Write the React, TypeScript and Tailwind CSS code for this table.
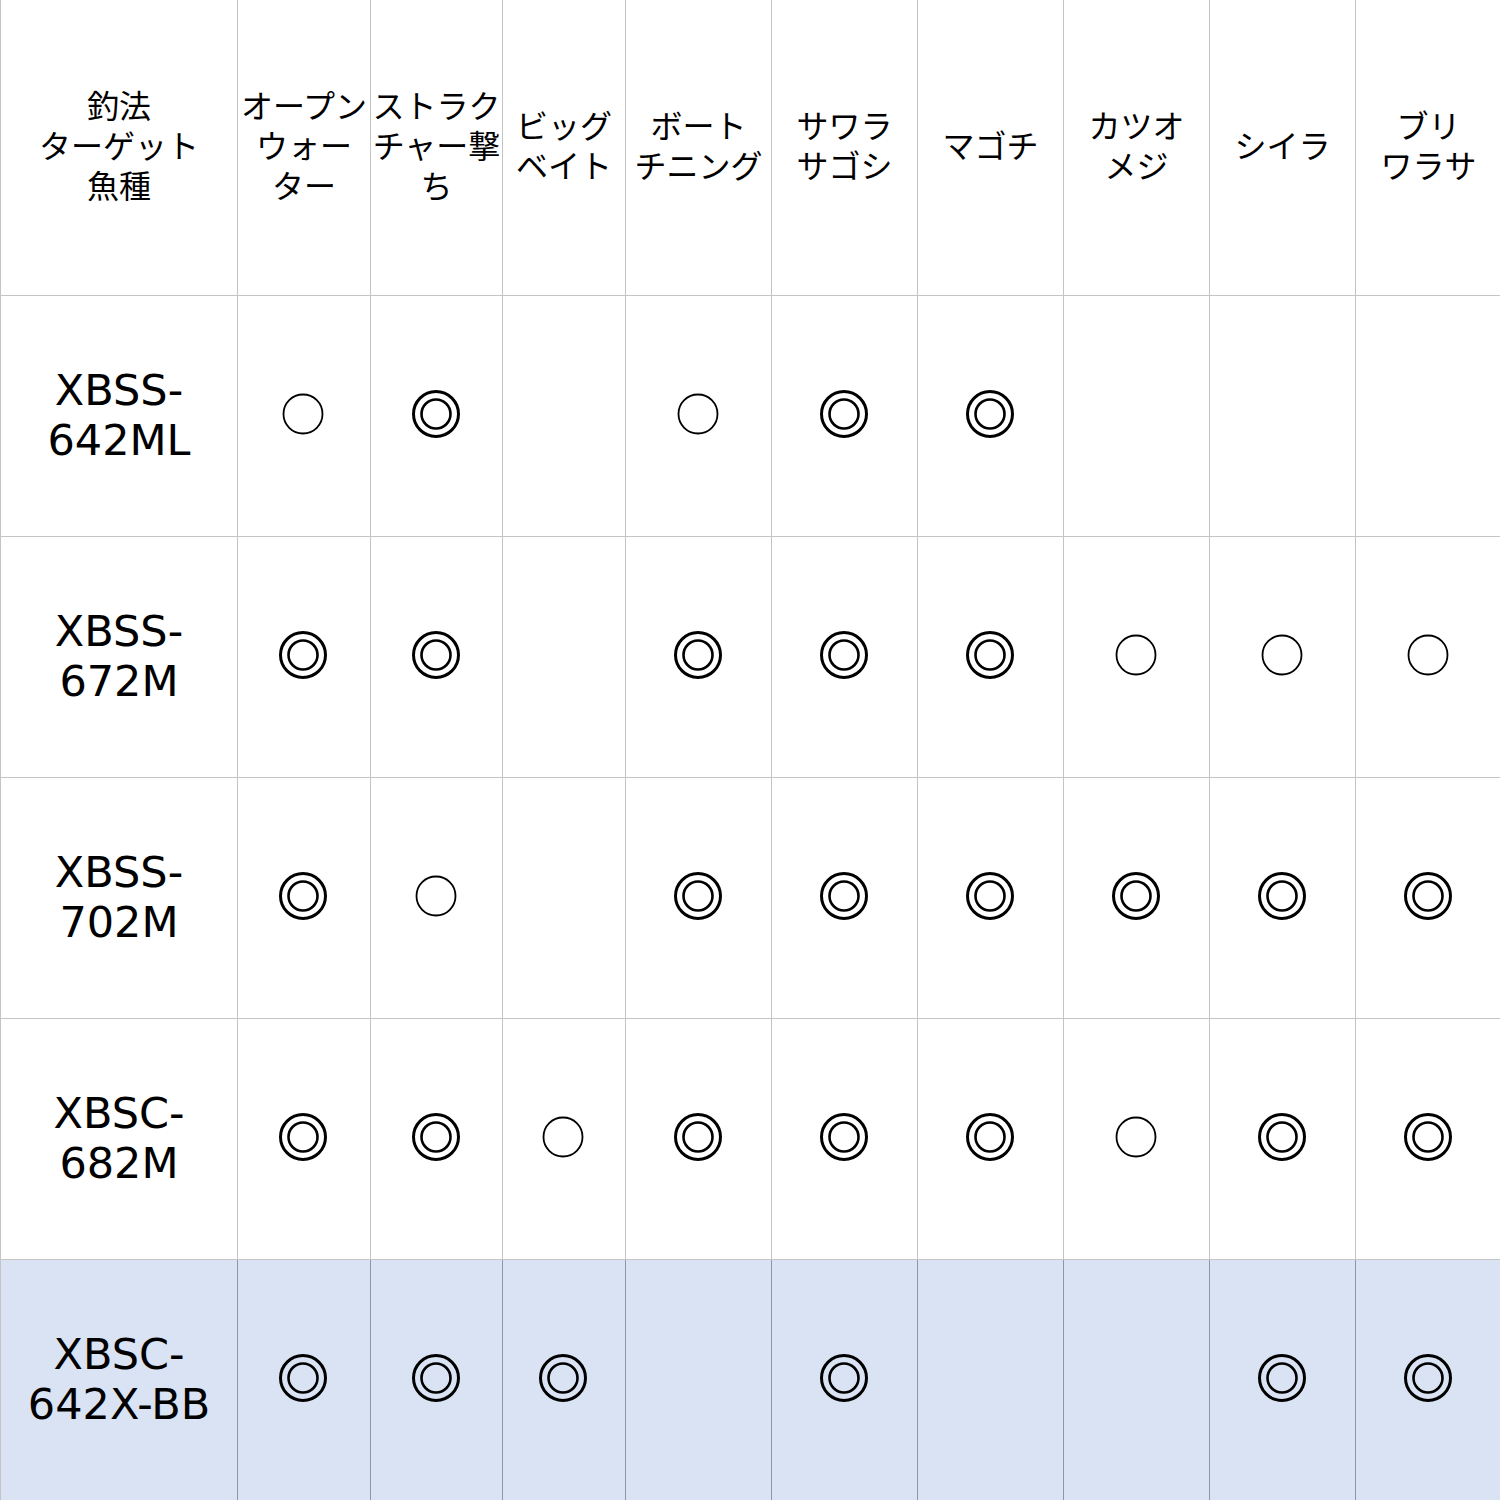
import React from 'react';

type Mark = 'o' | 'w' | '';

const headers: string[][] = [
  ['釣法', 'ターゲット', '魚種'],
  ['オープン', 'ウォー', 'ター'],
  ['ストラク', 'チャー撃', 'ち'],
  ['ビッグ', 'ベイト'],
  ['ボート', 'チニング'],
  ['サワラ', 'サゴシ'],
  ['マゴチ'],
  ['カツオ', 'メジ'],
  ['シイラ'],
  ['ブリ', 'ワラサ'],
];

const rows: { name: string[]; marks: Mark[]; blue?: boolean }[] = [
  { name: ['XBSS-', '642ML'], marks: ['o', 'w', '', 'o', 'w', 'w', '', '', ''] },
  { name: ['XBSS-', '672M'], marks: ['w', 'w', '', 'w', 'w', 'w', 'o', 'o', 'o'] },
  { name: ['XBSS-', '702M'], marks: ['w', 'o', '', 'w', 'w', 'w', 'w', 'w', 'w'] },
  { name: ['XBSC-', '682M'], marks: ['w', 'w', 'o', 'w', 'w', 'w', 'o', 'w', 'w'] },
  { name: ['XBSC-', '642X-BB'], marks: ['w', 'w', 'w', '', 'w', '', '', 'w', 'w'], blue: true },
];

const Circle: React.FC<{ mark: Mark }> = ({ mark }) => {
  if (mark === 'o') {
    return (
      <svg width="44" height="44" viewBox="0 0 44 44">
        <circle cx="22" cy="22" r="19.5" fill="none" stroke="#000" strokeWidth="1.8" />
      </svg>
    );
  }
  if (mark === 'w') {
    return (
      <svg width="50" height="50" viewBox="0 0 50 50">
        <circle cx="25" cy="25" r="22.5" fill="none" stroke="#000" strokeWidth="3" />
        <circle cx="25" cy="25" r="14.5" fill="none" stroke="#000" strokeWidth="2.6" />
      </svg>
    );
  }
  return null;
};

export default function App() {
  const font = { fontFamily: '"DejaVu Sans", "Noto Sans CJK JP", sans-serif' };
  return (
    <div className="w-[1500px] h-[1500px] bg-white text-black" style={font}>
      <div className="grid grid-cols-[237px_133px_132px_123px_146px_146px_146px_146px_146px_146px] grid-rows-[296px_241px_241px_241px_241px_241px] border-l border-[#c4c4c4]">
        {headers.map((h, i) => (
          <div
            key={i}
            className="flex flex-col items-center justify-center border-r border-b border-[#c4c4c4] text-[32px] leading-[40px] whitespace-nowrap pb-[7px]"
            style={{ fontFamily: '"Noto Sans CJK JP", sans-serif' }}
          >
            {h.map((l, j) => (
              <span key={j} className="block h-[40px]">{l}</span>
            ))}
          </div>
        ))}
        {rows.map((r, ri) => (
          <React.Fragment key={ri}>
            <div
              className={
                r.blue
                  ? 'flex flex-col items-center justify-center border-r border-b border-[#8e97a6] bg-[#dae3f3] text-[43px] leading-[50px] pb-[2px]'
                  : 'flex flex-col items-center justify-center border-r border-b border-[#c4c4c4] text-[43px] leading-[50px] pb-[2px]'
              }
            >
              {r.name.map((l, j) => (
                <span key={j}>{l}</span>
              ))}
            </div>
            {r.marks.map((m, mi) => (
              <div
                key={mi}
                className={
                  r.blue
                    ? 'flex items-center justify-center border-r border-b border-[#8e97a6] bg-[#dae3f3] pb-[5px] pr-[2px]'
                    : 'flex items-center justify-center border-r border-b border-[#c4c4c4] pb-[5px] pr-[2px]'
                }
              >
                <Circle mark={m} />
              </div>
            ))}
          </React.Fragment>
        ))}
      </div>
    </div>
  );
}
